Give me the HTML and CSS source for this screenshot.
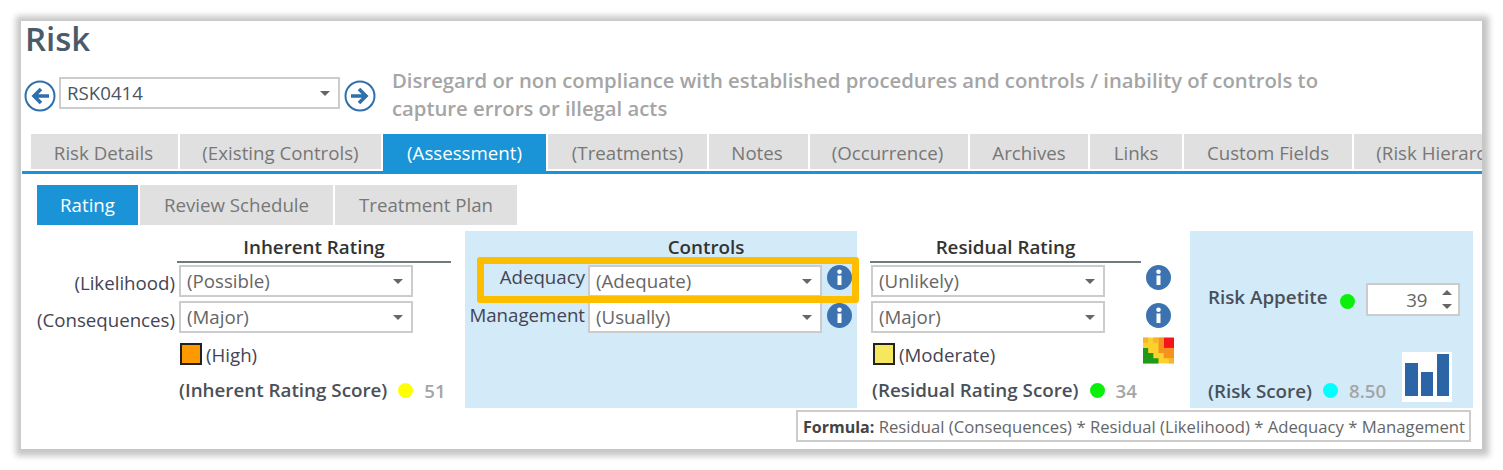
FILE: index.html
```html
<!DOCTYPE html>
<html>
<head>
    <title>Risk</title>
    <link rel="stylesheet" href="styles.css">
</head>
<body>
    <div class="shot">
        <h1>Risk</h1>
        <div class="nav-row">
            <svg class="arrow" viewBox="0 0 32 32"><circle cx="16" cy="16" r="14.5" fill="#fff" stroke="#2f6fae" stroke-width="2"/><path d="M25 16H10M17 9l-7 7 7 7" fill="none" stroke="#2f6fae" stroke-width="3.6"/></svg>
            <div class="select risk-select">RSK0414<span class="caret"></span></div>
            <svg class="arrow next" viewBox="0 0 32 32"><circle cx="16" cy="16" r="14.5" fill="#fff" stroke="#2f6fae" stroke-width="2"/><path d="M7 16h15M15 9l7 7-7 7" fill="none" stroke="#2f6fae" stroke-width="3.6"/></svg>
            <p class="desc">Disregard or non compliance with established procedures and controls / inability of controls to capture errors or illegal acts</p>
        </div>
        <div class="tabs">
            <span class="tab t1">Risk Details</span>
            <span class="tab t2">(Existing Controls)</span>
            <span class="tab t3 active">(Assessment)</span>
            <span class="tab t4">(Treatments)</span>
            <span class="tab t5">Notes</span>
            <span class="tab t6">(Occurrence)</span>
            <span class="tab t7">Archives</span>
            <span class="tab t8">Links</span>
            <span class="tab t9">Custom Fields</span>
            <span class="tab t10">(Risk Hierarchy)</span>
        </div>
        <div class="subtabs">
            <span class="subtab s1 active">Rating</span>
            <span class="subtab s2">Review Schedule</span>
            <span class="subtab s3">Treatment Plan</span>
        </div>
        <div class="panels">
            <section class="inherent">
                <h3 class="head">Inherent Rating</h3>
                <div class="row"><label class="lbl">(Likelihood)</label><div class="select field">(Possible)<span class="caret"></span></div></div>
                <div class="row"><label class="lbl">(Consequences)</label><div class="select field">(Major)<span class="caret"></span></div></div>
                <div class="rating"><span class="swatch orange"></span>(High)</div>
                <div class="score"><b>(Inherent Rating Score)</b><span class="dot yellow"></span><span class="num">51</span></div>
            </section>
            <section class="controls">
                <h3>Controls</h3>
                <div class="ctl-rows">
                    <div class="highlight"></div>
                    <div class="ctl-row">
                        <label>Adequacy</label>
                        <div class="select field">(Adequate)<span class="caret"></span></div>
                        <svg class="info" viewBox="0 0 25 25"><circle cx="12.5" cy="12.5" r="12.5" fill="#3d72b0"/><circle cx="12.5" cy="6.8" r="2.3" fill="#fff"/><rect x="10.5" y="10.5" width="4" height="9.5" fill="#fff"/></svg>
                    </div>
                    <div class="ctl-row">
                        <label>Management</label>
                        <div class="select field">(Usually)<span class="caret"></span></div>
                        <svg class="info" viewBox="0 0 25 25"><circle cx="12.5" cy="12.5" r="12.5" fill="#3d72b0"/><circle cx="12.5" cy="6.8" r="2.3" fill="#fff"/><rect x="10.5" y="10.5" width="4" height="9.5" fill="#fff"/></svg>
                    </div>
                </div>
            </section>
            <section class="residual">
                <h3 class="head">Residual Rating</h3>
                <div class="row">
                    <div class="select field">(Unlikely)<span class="caret"></span></div>
                    <svg class="info" viewBox="0 0 25 25"><circle cx="12.5" cy="12.5" r="12.5" fill="#3d72b0"/><circle cx="12.5" cy="6.8" r="2.3" fill="#fff"/><rect x="10.5" y="10.5" width="4" height="9.5" fill="#fff"/></svg>
                </div>
                <div class="row">
                    <div class="select field">(Major)<span class="caret"></span></div>
                    <svg class="info" viewBox="0 0 25 25"><circle cx="12.5" cy="12.5" r="12.5" fill="#3d72b0"/><circle cx="12.5" cy="6.8" r="2.3" fill="#fff"/><rect x="10.5" y="10.5" width="4" height="9.5" fill="#fff"/></svg>
                </div>
                <div class="rating">
                    <span class="swatch pale"></span>(Moderate)
                    <svg class="heat" viewBox="0 0 6 5">
                        <rect width="6" height="5" fill="#fbd22c"/>
                        <path d="M4 0h2v2H4z" fill="#f5141a"/>
                        <path d="M3 0h1v2H3zM3 2h3v1H3zM4 3h2v1H4z" fill="#f7921e"/>
                        <path d="M2 0h1v1H2zM5 4h1v1H5zM0 0h1v1H0z" fill="#f8b428"/>
                        <path d="M0 2h1v1H0zM0 3h2v1H0zM0 4h3v1H0z" fill="#1c9a18"/>
                    </svg>
                </div>
                <div class="score"><b>(Residual Rating Score)</b><span class="dot green"></span><span class="num">34</span></div>
            </section>
            <section class="appetite">
                <div class="app-row"><b>Risk Appetite</b><span class="dot green"></span>
                    <div class="spin">39<span class="spin-btns"><i class="up"></i><i class="down"></i></span></div>
                </div>
                <div class="risk-score"><b>(Risk Score)</b><span class="dot cyan"></span><span class="num">8.50</span>
                    <svg class="bars" viewBox="0 0 50 50" shape-rendering="crispEdges"><rect width="50" height="50" fill="#fff"/><rect x="3" y="11" width="13" height="33" fill="#2b65a5"/><rect x="19" y="20" width="12" height="24" fill="#2b65a5"/><rect x="35" y="2" width="12" height="42" fill="#2b65a5"/></svg>
                </div>
            </section>
        </div>
        <div class="formula"><b>Formula:</b> Residual (Consequences) * Residual (Likelihood) * Adequacy * Management</div>
    </div>
</body>
</html>
```

FILE: styles.css
```css
* {
    box-sizing: border-box;
}
html, body {
    margin: 0;
    height: 470px;
    overflow: hidden;
    background: #fff;
}
body {
    padding: 21px;
    font-family: "Open Sans", sans-serif;
    font-size: 18.7px;
    color: #4a5560;
}
.shot {
    width: 1461px;
    height: 428px;
    padding-left: 3px;
    background: #fff;
    box-shadow: 1px 1px 6px 6px #c6c6c6;
}
h1 {
    margin: 0 0 0 1px;
    font-size: 33px;
    line-height: 36px;
    font-weight: 600;
    color: #4a5a68;
}
.nav-row {
    display: flex;
    align-items: center;
    height: 56px;
    margin-top: 10px;
}
.arrow {
    width: 32px;
    height: 32px;
    flex: none;
    margin-top: 2px;
    margin-right: 3px;
}
.arrow.next {
    margin-right: 0;
}
.select {
    position: relative;
    height: 32px;
    line-height: 27px;
    padding-left: 6px;
    background: #fff;
    border: 2px solid #ccc;
    color: #666;
    flex: none;
}
.caret {
    position: absolute;
    right: 8px;
    top: 12px;
    border: 5px solid transparent;
    border-top: 5px solid #666;
    border-bottom: 0;
}
.risk-select {
    width: 281px;
    margin-right: 4px;
    margin-bottom: 4px;
    color: #4a5560;
}
.desc {
    margin: 0 0 2px 16px;
    width: 960px;
    font-size: 20.3px;
    line-height: 28px;
    font-weight: 600;
    color: #a5a5a5;
}
.tabs {
    display: flex;
    align-items: flex-start;
    height: 37px;
    margin-top: 11px;
    margin-left: 7px;
    gap: 2px;
    white-space: nowrap;
    overflow: hidden;
}
.tab {
    flex: none;
    height: 35px;
    padding-top: 6px;
    line-height: 26px;
    text-align: center;
    background: #e0e0e0;
    color: #777;
}
.tab.active, .subtab.active {
    background: #1a94d6;
    color: #fff;
}
.tab.active {
    height: 37px;
}
.t1 { width: 147px; padding-right: 2px; }
.t2 { width: 201px; }
.t3 { width: 163px; }
.t4 { width: 159px; }
.t5 { width: 99px; padding-right: 3px; }
.t6 { width: 158px; padding-right: 3px; }
.t7 { width: 118px; }
.t8 { width: 92px; }
.t9 { width: 168px; }
.t10 { width: 180px; }
.subtabs {
    display: flex;
    gap: 2px;
    border-top: 3px solid #1a94d6;
    margin-left: -2px;
    padding: 11px 0 0 15px;
    height: 54px;
}
.subtab {
    line-height: 40px;
    text-align: center;
    background: #e0e0e0;
    color: #777;
}
.s1 { width: 101px; }
.s2 { width: 193px; }
.s3 { width: 182px; }
.panels {
    display: flex;
    height: 177px;
    margin-top: 6px;
    margin-left: -2px;
    color: #445;
}
.panels h3 {
    margin: 0 0 2px;
    padding-top: 3px;
    border-bottom: 2px solid transparent;
    text-align: center;
    font-size: 18.8px;
    line-height: 27px;
    font-weight: 600;
    color: #333;
}
.panels b {
    font-size: 18.8px;
    font-weight: 600;
    color: #4a5058;
    white-space: nowrap;
}
.inherent {
    width: 443px;
    flex: none;
}
.panels .head {
    border-bottom-color: #6d7c7c;
}
.inherent .head {
    width: 274px;
    margin-left: 155px;
}
.row {
    display: flex;
    height: 36px;
    align-items: flex-start;
}
.lbl {
    width: 153px;
    margin-right: 4px;
    line-height: 36px;
    text-align: right;
    white-space: nowrap;
}
.row + .row .lbl {
    line-height: 38px;
}
.field {
    width: 234px;
}
.rating {
    display: flex;
    align-items: center;
    height: 36px;
    margin-top: -1px;
    margin-left: 158px;
}
.swatch {
    flex: none;
    width: 22px;
    height: 22px;
    margin-right: 4px;
    border: 2px solid #222;
}
.orange { background: #ff9900; }
.pale { background: #f5e85e; }
.score {
    display: flex;
    align-items: center;
    height: 36px;
    margin-left: 157px;
}
.dot {
    flex: none;
    width: 15px;
    height: 15px;
    margin: 0 11px;
    border-radius: 50%;
}
.yellow { background: #ffff00; }
.green { background: #0bf00b; }
.cyan { background: #00ffff; }
.num {
    color: #a5a5a5;
    font-weight: 600;
}
.controls {
    width: 392px;
    flex: none;
    background: #d3eaf8;
}
.controls h3 {
    padding-left: 90px;
}
.ctl-rows {
    position: relative;
}
.ctl-row {
    display: flex;
    height: 36px;
}
.ctl-row label {
    width: 120px;
    margin-right: 3px;
    line-height: 24px;
    text-align: right;
    color: #445;
}
.ctl-row + .ctl-row label {
    margin-top: 2px;
}
.info {
    flex: none;
    width: 25px;
    height: 25px;
    margin-left: 5px;
}
.ctl-row + .ctl-row .info, .row + .row .info {
    margin-top: 2px;
}
.highlight {
    position: absolute;
    left: 12px;
    top: -8px;
    width: 382px;
    height: 46px;
    border: 7px solid #fdbe00;
    border-radius: 3px;
    z-index: 1;
}
.residual {
    width: 333px;
    flex: none;
    padding-left: 13px;
}
.residual .head {
    width: 271px;
}
.residual .row {
    margin-left: 1px;
}
.residual .info {
    margin-left: 41px;
}
.residual .rating {
    position: relative;
    margin-left: 3px;
}
.heat {
    position: absolute;
    left: 270px;
    top: 1px;
    width: 31px;
    height: 27px;
}
.residual .score {
    margin-left: 2px;
}
.appetite {
    width: 283px;
    flex: none;
    padding: 52px 0 0 18px;
    background: #d3eaf8;
}
.app-row {
    display: flex;
    align-items: center;
    height: 33px;
    margin-bottom: 36px;
}
.app-row b {
    margin-top: -6px;
}
.app-row .dot {
    margin: 4px 11px 0 12px;
}
.spin {
    position: relative;
    width: 94px;
    height: 33px;
    line-height: 29px;
    padding-right: 30px;
    text-align: right;
    background: #fff;
    border: 2px solid #ccc;
    color: #666;
}
.spin-btns i {
    position: absolute;
    right: 6px;
    border: 5px solid transparent;
}
.spin-btns .up {
    top: 5px;
    border-top: 0;
    border-bottom: 5px solid #666;
}
.spin-btns .down {
    bottom: 5px;
    border-bottom: 0;
    border-top: 5px solid #666;
}
.risk-score {
    display: flex;
    align-items: flex-end;
    height: 50px;
}
.risk-score b, .risk-score .num {
    line-height: 22px;
}
.risk-score .dot {
    margin-bottom: 4px;
}
.bars {
    flex: none;
    width: 50px;
    height: 50px;
    margin-left: 16px;
}
.formula {
    width: 675px;
    height: 32px;
    margin: 2px 0 0 772px;
    padding-left: 5px;
    line-height: 30px;
    border: 2px solid #ccc;
    background: #fff;
    font-size: 16.7px;
    color: #666;
    white-space: nowrap;
}
.formula b {
    font-size: 16px;
    color: #444;
}
```
